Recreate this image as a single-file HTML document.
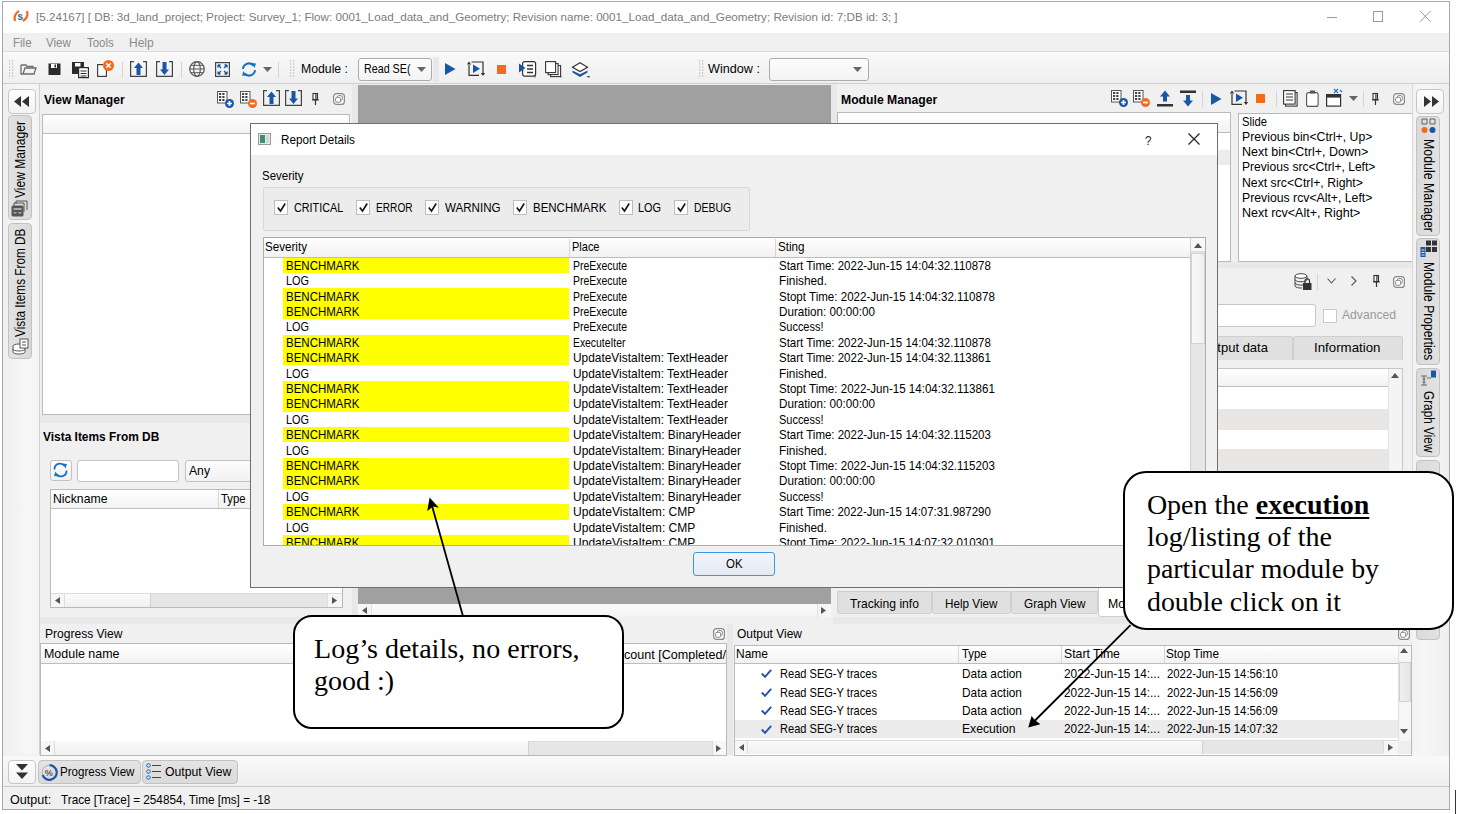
<!DOCTYPE html>
<html><head><meta charset="utf-8">
<style>
*{box-sizing:border-box;margin:0;padding:0}
html,body{width:1457px;height:814px;overflow:hidden;background:#fff}
body{position:relative;font-family:"Liberation Sans",sans-serif;font-size:11.5px;color:#000}
.a{position:absolute}
.t{position:absolute;white-space:nowrap;line-height:1;transform-origin:0 0}
svg{position:absolute;overflow:visible}
</style></head><body>
<div class="a" style="left:0px;top:0px;width:1457px;height:814px;background:#fff"></div>
<div class="a" style="left:2px;top:1px;width:1448px;height:809px;border:1px solid #a8a8a8;background:#f0f0f0"></div>
<div class="a" style="left:3px;top:2px;width:1446px;height:31px;background:#fff"></div>
<svg style="left:12px;top:9px;" width="18" height="14" viewBox="0 0 18 14"><path d="M3 12 Q1 6 7 2" stroke="#f26b1d" stroke-width="2.2" fill="none"/><path d="M15 2 Q17 8 11 12" stroke="#f26b1d" stroke-width="2.2" fill="none"/><text x="5.5" y="11" font-family="Liberation Sans" font-weight="bold" font-size="10" fill="#1f5fa8">s</text></svg>
<div class="t" style="left:36.00px;top:11.48px;font-size:11.6px;color:#7b7b7b;transform:scaleX(1.0036);">[5.24167] [ DB: 3d_land_project; Project: Survey_1; Flow: 0001_Load_data_and_Geometry; Revision name: 0001_Load_data_and_Geometry; Revision id: 7;DB id: 3; ]</div>
<div class="a" style="left:1327px;top:16.5px;width:10px;height:1.2px;background:#999"></div>
<div class="a" style="left:1373px;top:11px;width:10px;height:10.5px;border:1px solid #999"></div>
<svg style="left:1420px;top:11px;" width="11" height="11" viewBox="0 0 11 11"><path d="M0 0 L10.6 10.8 M10.6 0 L0 10.8" stroke="#999" stroke-width="1"/></svg>
<div class="a" style="left:3px;top:33px;width:1446px;height:19px;background:#f0f0f0"></div>
<div class="a" style="left:3px;top:51px;width:1446px;height:1px;background:#dcdcdc"></div>
<div class="t" style="left:13.00px;top:38.13px;font-size:11.9px;color:#8a8a8a;transform:scaleX(0.9700);">File</div>
<div class="t" style="left:46.30px;top:38.13px;font-size:11.9px;color:#8a8a8a;transform:scaleX(0.9774);">View</div>
<div class="t" style="left:86.50px;top:38.13px;font-size:11.9px;color:#8a8a8a;transform:scaleX(0.9611);">Tools</div>
<div class="t" style="left:128.70px;top:38.13px;font-size:11.9px;color:#8a8a8a;transform:scaleX(1.0092);">Help</div>
<div class="a" style="left:3px;top:52px;width:1446px;height:32px;background:linear-gradient(#f9f9f9,#efefef)"></div>
<div class="a" style="left:3px;top:83px;width:1446px;height:1px;background:#cfcfcf"></div>
<svg style="left:9px;top:60px;" width="5" height="17" viewBox="0 0 5 17"><circle cx="0.7" cy="1" r="0.65" fill="#b0b0b0"/><circle cx="0.7" cy="4" r="0.65" fill="#b0b0b0"/><circle cx="0.7" cy="7" r="0.65" fill="#b0b0b0"/><circle cx="0.7" cy="10" r="0.65" fill="#b0b0b0"/><circle cx="0.7" cy="13" r="0.65" fill="#b0b0b0"/><circle cx="0.7" cy="16" r="0.65" fill="#b0b0b0"/><circle cx="3.7" cy="1" r="0.65" fill="#b0b0b0"/><circle cx="3.7" cy="4" r="0.65" fill="#b0b0b0"/><circle cx="3.7" cy="7" r="0.65" fill="#b0b0b0"/><circle cx="3.7" cy="10" r="0.65" fill="#b0b0b0"/><circle cx="3.7" cy="13" r="0.65" fill="#b0b0b0"/><circle cx="3.7" cy="16" r="0.65" fill="#b0b0b0"/></svg>
<svg style="left:290px;top:60px;" width="5" height="17" viewBox="0 0 5 17"><circle cx="0.7" cy="1" r="0.65" fill="#b0b0b0"/><circle cx="0.7" cy="4" r="0.65" fill="#b0b0b0"/><circle cx="0.7" cy="7" r="0.65" fill="#b0b0b0"/><circle cx="0.7" cy="10" r="0.65" fill="#b0b0b0"/><circle cx="0.7" cy="13" r="0.65" fill="#b0b0b0"/><circle cx="0.7" cy="16" r="0.65" fill="#b0b0b0"/><circle cx="3.7" cy="1" r="0.65" fill="#b0b0b0"/><circle cx="3.7" cy="4" r="0.65" fill="#b0b0b0"/><circle cx="3.7" cy="7" r="0.65" fill="#b0b0b0"/><circle cx="3.7" cy="10" r="0.65" fill="#b0b0b0"/><circle cx="3.7" cy="13" r="0.65" fill="#b0b0b0"/><circle cx="3.7" cy="16" r="0.65" fill="#b0b0b0"/></svg>
<svg style="left:699px;top:60px;" width="5" height="17" viewBox="0 0 5 17"><circle cx="0.7" cy="1" r="0.65" fill="#b0b0b0"/><circle cx="0.7" cy="4" r="0.65" fill="#b0b0b0"/><circle cx="0.7" cy="7" r="0.65" fill="#b0b0b0"/><circle cx="0.7" cy="10" r="0.65" fill="#b0b0b0"/><circle cx="0.7" cy="13" r="0.65" fill="#b0b0b0"/><circle cx="0.7" cy="16" r="0.65" fill="#b0b0b0"/><circle cx="3.7" cy="1" r="0.65" fill="#b0b0b0"/><circle cx="3.7" cy="4" r="0.65" fill="#b0b0b0"/><circle cx="3.7" cy="7" r="0.65" fill="#b0b0b0"/><circle cx="3.7" cy="10" r="0.65" fill="#b0b0b0"/><circle cx="3.7" cy="13" r="0.65" fill="#b0b0b0"/><circle cx="3.7" cy="16" r="0.65" fill="#b0b0b0"/></svg>
<div class="a" style="left:122px;top:62px;width:1px;height:16px;background:#d4d4d4"></div>
<div class="a" style="left:181px;top:62px;width:1px;height:16px;background:#d4d4d4"></div>
<div class="a" style="left:278px;top:62px;width:1px;height:16px;background:#d4d4d4"></div>
<svg style="left:20px;top:63px;" width="17" height="12" viewBox="0 0 17 12"><path d="M1 2 V11 H14 L16 5 H5 L3 11" fill="none" stroke="#6d6d6d" stroke-width="1.3"/><path d="M1 2 H6 L7 3.5 H13 V5" fill="none" stroke="#6d6d6d" stroke-width="1.3"/></svg>
<svg style="left:48px;top:63px;" width="13" height="12" viewBox="0 0 13 12"><rect x="0.5" y="0.5" width="12" height="11.5" fill="#2b2b2b"/><rect x="3" y="1" width="6" height="4" fill="#fff"/><rect x="6.5" y="1.5" width="1.5" height="3" fill="#2b2b2b"/></svg>
<svg style="left:72px;top:62px;" width="17" height="16" viewBox="0 0 17 16"><rect x="0" y="0" width="12" height="12" fill="#2b2b2b"/><rect x="3" y="1" width="5.5" height="3.5" fill="#fff"/><rect x="6.6" y="5.6" width="9.8" height="10" fill="#fff" stroke="#2b2b2b" stroke-width="1.2"/><path d="M8.5 9 H14.5 M8.5 11.5 H14.5 M8.5 14 H14.5" stroke="#2b2b2b" stroke-width="1.1"/></svg>
<svg style="left:97px;top:60px;" width="17" height="17" viewBox="0 0 17 17"><path d="M6 4.6 H0.6 V16.4 H9.4 V10" fill="#fff" stroke="#444" stroke-width="1.2"/><circle cx="11.5" cy="5.5" r="5.5" fill="#f26b1d"/><path d="M9.3 3.3 L13.7 7.7 M13.7 3.3 L9.3 7.7" stroke="#fff" stroke-width="1.6"/></svg>
<svg style="left:130px;top:61px;" width="17" height="16" viewBox="0 0 17 16"><path d="M4 0.6 H0.6 V15.4 H16.4 V0.6 H13" fill="none" stroke="#444" stroke-width="1.2"/><path d="M8.5 1.5 L13 7 H10.5 V14 H6.5 V7 H4 Z" fill="#1a56a6"/></svg>
<svg style="left:156px;top:61px;" width="17" height="16" viewBox="0 0 17 16"><path d="M4 0.6 H0.6 V15.4 H16.4 V0.6 H13" fill="none" stroke="#444" stroke-width="1.2"/><path d="M8.5 14 L13 8.5 H10.5 V1 H6.5 V8.5 H4 Z" fill="#1a56a6"/></svg>
<svg style="left:189px;top:61px;" width="16" height="16" viewBox="0 0 16 16"><circle cx="8" cy="8" r="7.3" fill="none" stroke="#555" stroke-width="1.2"/><ellipse cx="8" cy="8" rx="3.3" ry="7.3" fill="none" stroke="#555" stroke-width="1.1"/><path d="M0.7 8 H15.3 M2 4.3 H14 M2 11.7 H14" stroke="#555" stroke-width="1"/></svg>
<svg style="left:215px;top:62px;" width="15" height="15" viewBox="0 0 15 15"><rect x="0.6" y="0.6" width="13.8" height="13.8" fill="none" stroke="#444" stroke-width="1.2"/><path d="M3 3 L6 6 M3 3 H5.5 M3 3 V5.5 M12 3 L9 6 M12 3 H9.5 M12 3 V5.5 M3 12 L6 9 M3 12 H5.5 M3 12 V9.5 M12 12 L9 9 M12 12 H9.5 M12 12 V9.5" stroke="#1a56a6" stroke-width="1.3"/></svg>
<svg style="left:241px;top:62px;" width="16" height="15" viewBox="0 0 16 15"><path d="M2 7 A6 6 0 0 1 12.5 3.5" fill="none" stroke="#1a6fc4" stroke-width="2"/><path d="M14 8 A6 6 0 0 1 3.5 11.5" fill="none" stroke="#1a6fc4" stroke-width="2"/><path d="M10.5 1 L15 1.5 L13.5 6 Z M5.5 14 L1 13.5 L2.5 9 Z" fill="#1a6fc4"/></svg>
<svg style="left:263px;top:67px;" width="9" height="5" viewBox="0 0 9 5"><path d="M0 0 H9 L4.5 5 Z" fill="#666"/></svg>
<div class="t" style="left:301.00px;top:64.43px;font-size:11.9px;color:#000;transform:scaleX(1.0298);">Module :</div>
<div class="a" style="left:358px;top:58px;width:74px;height:23px;background:linear-gradient(#fdfdfd,#f4f4f4);border:1px solid #acacac;border-radius:3px"></div>
<div class="t" style="left:363.50px;top:64.43px;font-size:11.9px;color:#000;transform:scaleX(0.9013);">Read SE(</div>
<svg style="left:417px;top:67px;" width="9" height="5" viewBox="0 0 9 5"><path d="M0 0 H9 L4.5 5 Z" fill="#666"/></svg>
<div class="a" style="left:433px;top:57px;width:6px;height:25px;background:#e8e8e8"></div>
<svg style="left:445px;top:63px;" width="11" height="12" viewBox="0 0 11 12"><path d="M0 0 L10.5 6 L0 12 Z" fill="#1a56a6"/></svg>
<svg style="left:468px;top:61px;" width="17" height="16" viewBox="0 0 17 16"><path d="M1 4 V14.4 H11" fill="none" stroke="#333" stroke-width="1.2"/><path d="M3.5 1 H15 V12" fill="none" stroke="#333" stroke-width="1.2"/><path d="M1 0.5 L-1.2 3.5 H3.2 Z" fill="#333"/><path d="M15 15 L12.8 12 H17.2 Z" fill="#333"/><path d="M5 3.5 L12 7.8 L5 12 Z" fill="#1a56a6"/></svg>
<div class="a" style="left:497px;top:65px;width:9px;height:9px;background:#f26b1d"></div>
<svg style="left:519px;top:61px;" width="18" height="17" viewBox="0 0 18 17"><rect x="3.6" y="0.6" width="13" height="14.5" rx="2" fill="#fff" stroke="#333" stroke-width="1.2"/><path d="M8 4.5 H14 M8 8 H14 M8 11.5 H14" stroke="#333" stroke-width="1.6"/><path d="M0 2.5 L6.5 7 L0 11.5 Z" fill="#1a56a6"/><path d="M15 15.5 L17 15.5 L16 16.8 Z" fill="#333"/></svg>
<svg style="left:545px;top:61px;" width="17" height="17" viewBox="0 0 17 17"><rect x="5.6" y="4.6" width="10" height="11" fill="#fff" stroke="#333" stroke-width="1.1"/><rect x="3.1" y="2.6" width="10" height="11" fill="#fff" stroke="#333" stroke-width="1.1"/><rect x="0.6" y="0.6" width="10" height="11" fill="#fff" stroke="#333" stroke-width="1.1"/><path d="M15 15.5 L17 15.5 L16 16.8 Z" fill="#333"/></svg>
<svg style="left:570.5px;top:61.5px;" width="20" height="17" viewBox="0 0 20 17"><path d="M9 0.8 L16.5 5.2 L9 9.6 L1.5 5.2 Z" fill="#fff" stroke="#333" stroke-width="1.2"/><path d="M1.5 8.6 L9 12.2 L16.5 8.6 L16.5 10.6 L9 15 L1.5 10.6 Z" fill="#1a56a6"/><path d="M15.5 14 H19.5 L17.5 16 Z" fill="#555"/></svg>
<div class="t" style="left:708.00px;top:64.43px;font-size:11.9px;color:#000;transform:scaleX(1.0626);">Window :</div>
<div class="a" style="left:769px;top:58px;width:100px;height:23px;background:linear-gradient(#fdfdfd,#f4f4f4);border:1px solid #acacac;border-radius:3px"></div>
<svg style="left:853px;top:67px;" width="9" height="5" viewBox="0 0 9 5"><path d="M0 0 H9 L4.5 5 Z" fill="#666"/></svg>
<div class="a" style="left:3px;top:84px;width:36px;height:671px;background:linear-gradient(90deg,#efefef,#f7f7f7 70%,#f2f2f2)"></div>
<div class="a" style="left:39px;top:84px;width:1px;height:671px;background:#d0d0d0"></div>
<div class="a" style="left:7.5px;top:89px;width:28px;height:25px;background:linear-gradient(#fdfdfd,#f3f3f3);border:1px solid #c6c6c6;border-radius:4px"></div>
<svg style="left:14px;top:96px;" width="16" height="11" viewBox="0 0 16 11"><path d="M7 0 L0 5.5 L7 11 Z M15 0 L8 5.5 L15 11 Z" fill="#333"/></svg>
<div class="a" style="left:7.5px;top:115px;width:24px;height:105px;background:linear-gradient(90deg,#e2e2e2,#dadada);border:1px solid #c2c2c2;border-radius:4px"></div>
<div class="t" style="left:13.40px;top:198.20px;font-size:14.2px;transform-origin:0 0;transform:rotate(-90deg) scaleX(0.8507)">View Manager</div>
<svg style="left:11px;top:200px;" width="17" height="17" viewBox="0 0 17 17"><path d="M5 4 V1 H16 V10" fill="none" stroke="#555" stroke-width="1"/><path d="M3 6 V3 H13 V12" fill="none" stroke="#555" stroke-width="1"/><rect x="0.5" y="5.5" width="12" height="11" rx="1.5" fill="#555"/><rect x="2.5" y="8" width="8" height="2" fill="#aaa"/><rect x="2.5" y="12" width="3" height="1.5" fill="#aaa"/><rect x="7.5" y="12" width="3" height="1.5" fill="#aaa"/></svg>
<div class="a" style="left:7.5px;top:222.5px;width:24px;height:136px;background:linear-gradient(90deg,#e2e2e2,#dadada);border:1px solid #c2c2c2;border-radius:4px"></div>
<div class="t" style="left:13.40px;top:337.30px;font-size:14.2px;transform-origin:0 0;transform:rotate(-90deg) scaleX(0.8300)">Vista Items From DB</div>
<svg style="left:11px;top:337px;" width="18" height="18" viewBox="0 0 18 18"><ellipse cx="8" cy="9" rx="6" ry="2" fill="#fff" stroke="#555"/><path d="M2 9 V15 A6 2 0 0 0 14 15 V9" fill="#fff" stroke="#555"/><path d="M2 12 A6 2 0 0 0 14 12" fill="none" stroke="#555"/><rect x="9" y="2" width="8" height="9" fill="#fff" stroke="#555"/><path d="M11 5 H15 M11 8 H15" stroke="#555"/></svg>
<div class="t" style="left:43.60px;top:93.54px;font-size:12px;color:#000;font-weight:bold;transform:scaleX(1.0099);">View Manager</div>
<svg style="left:217px;top:91px;" width="17" height="17" viewBox="0 0 17 17"><rect x="0.5" y="0.5" width="9.5" height="11.5" fill="#fff" stroke="#555" stroke-width="1"/><rect x="2" y="2" width="2.2" height="2" fill="#444"/><rect x="2" y="5" width="2.2" height="2" fill="#444"/><rect x="2" y="8" width="2.2" height="2" fill="#444"/><rect x="5.3" y="2" width="2.2" height="2" fill="#444"/><rect x="5.3" y="5" width="2.2" height="2" fill="#444"/><rect x="5.3" y="8" width="2.2" height="2" fill="#444"/><circle cx="12.5" cy="12.5" r="4.5" fill="#1a56a6"/><path d="M10 12.5 H15 M12.5 10 V15" stroke="#fff" stroke-width="1.7"/></svg>
<svg style="left:240px;top:91px;" width="17" height="17" viewBox="0 0 17 17"><rect x="0.5" y="0.5" width="9.5" height="11.5" fill="#fff" stroke="#555" stroke-width="1"/><rect x="2" y="2" width="2.2" height="2" fill="#444"/><rect x="2" y="5" width="2.2" height="2" fill="#444"/><rect x="2" y="8" width="2.2" height="2" fill="#444"/><rect x="5.3" y="2" width="2.2" height="2" fill="#444"/><rect x="5.3" y="5" width="2.2" height="2" fill="#444"/><rect x="5.3" y="8" width="2.2" height="2" fill="#444"/><circle cx="12.5" cy="12.5" r="4.5" fill="#f26b1d"/><path d="M10 12.5 H15" stroke="#fff" stroke-width="1.7"/></svg>
<svg style="left:263px;top:90px;" width="17" height="17" viewBox="0 0 17 17"><path d="M4 0.6 H0.6 V15.4 H16.4 V0.6 H13" fill="none" stroke="#444" stroke-width="1.2"/><path d="M8.5 1.5 L13 7 H10.5 V14 H6.5 V7 H4 Z" fill="#1a56a6"/></svg>
<svg style="left:285px;top:90px;" width="17" height="17" viewBox="0 0 17 17"><path d="M4 0.6 H0.6 V15.4 H16.4 V0.6 H13" fill="none" stroke="#444" stroke-width="1.2"/><path d="M8.5 14 L13 8.5 H10.5 V1 H6.5 V8.5 H4 Z" fill="#1a56a6"/></svg>
<svg style="left:312px;top:93px;" width="7" height="12" viewBox="0 0 7 12"><rect x="1" y="0.5" width="4.5" height="6" fill="#fff" stroke="#333" stroke-width="1.1"/><rect x="3.3" y="1" width="1.2" height="5" fill="#333"/><path d="M0 7 H7 M3.5 7 V12" stroke="#333" stroke-width="1.2"/></svg>
<svg style="left:333px;top:93px;" width="12" height="12" viewBox="0 0 12 12"><rect x="0.6" y="0.6" width="10.8" height="10.8" rx="3" fill="#fafafa" stroke="#8a8a8a" stroke-width="1.2"/><rect x="4.3" y="2.6" width="5" height="5" rx="1.5" fill="#fff" stroke="#8a8a8a" stroke-width="1"/><rect x="2.6" y="4.3" width="5" height="5" rx="1.5" fill="#fff" stroke="#8a8a8a" stroke-width="1"/></svg>
<div class="a" style="left:42px;top:114px;width:308px;height:301px;background:#fff;border:1px solid #b9b9b9"></div>
<div class="a" style="left:43px;top:115px;width:306px;height:19px;background:linear-gradient(#fff,#f2f2f2);border-bottom:1px solid #bdbdbd"></div>
<div class="a" style="left:40px;top:415px;width:318px;height:8px;background:#e8e8e8"></div>
<div class="t" style="left:43.40px;top:431.24px;font-size:12px;color:#000;font-weight:bold;transform:scaleX(0.9928);">Vista Items From DB</div>
<div class="a" style="left:49.5px;top:459.5px;width:22px;height:21.5px;background:linear-gradient(#fdfdfd,#f1f1f1);border:1px solid #c2c2c2;border-radius:3px"></div>
<svg style="left:53px;top:463px;" width="15" height="14" viewBox="0 0 15 14"><path d="M1.5 6.5 A5.5 5.5 0 0 1 11.5 3" fill="none" stroke="#1a6fc4" stroke-width="1.8"/><path d="M13.5 7.5 A5.5 5.5 0 0 1 3.5 11" fill="none" stroke="#1a6fc4" stroke-width="1.8"/><path d="M9.5 0.5 L14 1 L12.5 5.5 Z M5.5 13.5 L1 13 L2.5 8.5 Z" fill="#1a6fc4"/></svg>
<div class="a" style="left:77px;top:459.5px;width:101.5px;height:22.5px;background:#fff;border:1px solid #c2c2c2;border-radius:3px"></div>
<div class="a" style="left:184.5px;top:459.8px;width:100px;height:22.2px;background:linear-gradient(#fdfdfd,#f1f1f1);border:1px solid #c2c2c2;border-radius:3px"></div>
<div class="t" style="left:189.00px;top:466.23px;font-size:11.9px;color:#000;transform:scaleX(1.0241);">Any</div>
<div class="a" style="left:49.5px;top:489px;width:293px;height:119px;background:#fff;border:1px solid #b9b9b9"></div>
<div class="a" style="left:50.5px;top:490px;width:291px;height:19px;background:linear-gradient(#fff,#f2f2f2);border-bottom:1px solid #bdbdbd"></div>
<div class="a" style="left:217.5px;top:490px;width:1px;height:18px;background:#d6d6d6"></div>
<div class="t" style="left:52.50px;top:494.23px;font-size:11.9px;color:#000;transform:scaleX(1.0301);">Nickname</div>
<div class="t" style="left:221.00px;top:494.23px;font-size:11.9px;color:#000;transform:scaleX(0.9496);">Type</div>
<div class="a" style="left:50.5px;top:593px;width:291px;height:14px;background:#e6e6e6;border-top:1px solid #dcdcdc"></div>
<div class="a" style="left:50.5px;top:594px;width:14.5px;height:13px;background:#f6f6f6;border-right:1px solid #dcdcdc"></div>
<div class="a" style="left:65px;top:594px;width:85.5px;height:13px;background:linear-gradient(#fbfbfb,#f0f0f0);border-right:1px solid #d0d0d0"></div>
<div class="a" style="left:327px;top:594px;width:14.5px;height:13px;background:#f6f6f6;border-left:1px solid #dcdcdc"></div>
<svg style="left:55px;top:597px;" width="5" height="7" viewBox="0 0 5 7"><path d="M5 0 V7 L0 3.5 Z" fill="#555"/></svg>
<svg style="left:332px;top:597px;" width="5" height="7" viewBox="0 0 5 7"><path d="M0 0 V7 L5 3.5 Z" fill="#555"/></svg>
<div class="a" style="left:40px;top:617px;width:318px;height:7px;background:#e8e8e8"></div>
<div class="a" style="left:352px;top:84px;width:6px;height:540px;background:#e8e8e8"></div>
<div class="a" style="left:358px;top:85px;width:473px;height:519px;background:#a0a0a0"></div>
<div class="a" style="left:358px;top:604px;width:473px;height:13px;background:linear-gradient(#fbfbfb,#f3f3f3)"></div>
<div class="a" style="left:358px;top:604px;width:14px;height:13px;background:#f6f6f6;border-right:1px solid #e0e0e0"></div>
<svg style="left:362px;top:607px;" width="5" height="7" viewBox="0 0 5 7"><path d="M5 0 V7 L0 3.5 Z" fill="#555"/></svg>
<div class="a" style="left:817px;top:604px;width:14px;height:13px;background:#f6f6f6;border-left:1px solid #e0e0e0"></div>
<svg style="left:821px;top:607px;" width="5" height="7" viewBox="0 0 5 7"><path d="M0 0 V7 L5 3.5 Z" fill="#555"/></svg>
<div class="a" style="left:831px;top:84px;width:6px;height:503px;background:#e8e8e8"></div>
<div class="t" style="left:840.50px;top:93.54px;font-size:12px;color:#000;font-weight:bold;transform:scaleX(1.0161);">Module Manager</div>
<svg style="left:1111px;top:90px;" width="17" height="17" viewBox="0 0 17 17"><rect x="0.5" y="0.5" width="9.5" height="11.5" fill="#fff" stroke="#555" stroke-width="1"/><rect x="2" y="2" width="2.2" height="2" fill="#444"/><rect x="2" y="5" width="2.2" height="2" fill="#444"/><rect x="2" y="8" width="2.2" height="2" fill="#444"/><rect x="5.3" y="2" width="2.2" height="2" fill="#444"/><rect x="5.3" y="5" width="2.2" height="2" fill="#444"/><rect x="5.3" y="8" width="2.2" height="2" fill="#444"/><circle cx="12.5" cy="12.5" r="4.5" fill="#1a56a6"/><path d="M10 12.5 H15 M12.5 10 V15" stroke="#fff" stroke-width="1.7"/></svg>
<svg style="left:1133px;top:90px;" width="17" height="17" viewBox="0 0 17 17"><rect x="0.5" y="0.5" width="9.5" height="11.5" fill="#fff" stroke="#555" stroke-width="1"/><rect x="2" y="2" width="2.2" height="2" fill="#444"/><rect x="2" y="5" width="2.2" height="2" fill="#444"/><rect x="2" y="8" width="2.2" height="2" fill="#444"/><rect x="5.3" y="2" width="2.2" height="2" fill="#444"/><rect x="5.3" y="5" width="2.2" height="2" fill="#444"/><rect x="5.3" y="8" width="2.2" height="2" fill="#444"/><circle cx="12.5" cy="12.5" r="4.5" fill="#f26b1d"/><path d="M10 12.5 H15" stroke="#fff" stroke-width="1.7"/></svg>
<svg style="left:1156px;top:90px;" width="18" height="17" viewBox="0 0 18 17"><path d="M9 0.5 L14 6.5 H11 V11.5 H7 V6.5 H4 Z" fill="#1a56a6"/><rect x="1" y="14" width="16" height="2.5" fill="#333"/></svg>
<svg style="left:1179px;top:90px;" width="18" height="17" viewBox="0 0 18 17"><rect x="1" y="0.5" width="16" height="2.5" fill="#333"/><path d="M9 16.5 L14 10.5 H11 V5 H7 V10.5 H4 Z" fill="#1a56a6"/></svg>
<div class="a" style="left:1202px;top:91px;width:1px;height:16px;background:#d4d4d4"></div>
<svg style="left:1211px;top:93px;" width="11" height="12" viewBox="0 0 11 12"><path d="M0 0 L10.5 6 L0 12 Z" fill="#1a56a6"/></svg>
<svg style="left:1231px;top:90px;" width="17" height="16" viewBox="0 0 17 16"><path d="M1 4 V14.4 H11" fill="none" stroke="#333" stroke-width="1.2"/><path d="M3.5 1 H15 V12" fill="none" stroke="#333" stroke-width="1.2"/><path d="M1 0.5 L-1.2 3.5 H3.2 Z" fill="#333"/><path d="M15 15 L12.8 12 H17.2 Z" fill="#333"/><path d="M5 3.5 L12 7.8 L5 12 Z" fill="#1a56a6"/></svg>
<div class="a" style="left:1256px;top:94px;width:9px;height:9px;background:#f26b1d"></div>
<div class="a" style="left:1276px;top:91px;width:1px;height:16px;background:#d4d4d4"></div>
<svg style="left:1283px;top:90px;" width="15" height="17" viewBox="0 0 15 17"><rect x="2.6" y="2.6" width="11.5" height="13.5" fill="#fff" stroke="#333" stroke-width="1.1"/><rect x="0.6" y="0.6" width="11.5" height="13.5" fill="#fff" stroke="#333" stroke-width="1.1"/><path d="M3 4 H10 M3 7 H10 M3 10 H10" stroke="#333" stroke-width="1.1"/></svg>
<svg style="left:1306px;top:90px;" width="13" height="17" viewBox="0 0 13 17"><rect x="0.6" y="2.6" width="11.5" height="13.8" rx="2" fill="#fff" stroke="#555" stroke-width="1.1"/><rect x="4" y="0.5" width="5" height="3" fill="#555"/></svg>
<svg style="left:1326px;top:88px;" width="17" height="19" viewBox="0 0 17 19"><rect x="0.6" y="6.6" width="14" height="11.5" fill="#fff" stroke="#333" stroke-width="1.2"/><rect x="0.6" y="6.6" width="14" height="3" fill="#333"/><path d="M8 1 L12 5 M12 1 L8 5 M14 2 L16 4" stroke="#1a6fc4" stroke-width="1.1"/></svg>
<svg style="left:1349px;top:96px;" width="9" height="5" viewBox="0 0 9 5"><path d="M0 0 H9 L4.5 5 Z" fill="#666"/></svg>
<div class="a" style="left:1363px;top:91px;width:1px;height:16px;background:#d4d4d4"></div>
<svg style="left:1372px;top:93px;" width="7" height="12" viewBox="0 0 7 12"><rect x="1" y="0.5" width="4.5" height="6" fill="#fff" stroke="#333" stroke-width="1.1"/><rect x="3.3" y="1" width="1.2" height="5" fill="#333"/><path d="M0 7 H7 M3.5 7 V12" stroke="#333" stroke-width="1.2"/></svg>
<svg style="left:1393px;top:93px;" width="12" height="12" viewBox="0 0 12 12"><rect x="0.6" y="0.6" width="10.8" height="10.8" rx="3" fill="#fafafa" stroke="#8a8a8a" stroke-width="1.2"/><rect x="4.3" y="2.6" width="5" height="5" rx="1.5" fill="#fff" stroke="#8a8a8a" stroke-width="1"/><rect x="2.6" y="4.3" width="5" height="5" rx="1.5" fill="#fff" stroke="#8a8a8a" stroke-width="1"/></svg>
<div class="a" style="left:837px;top:112px;width:394px;height:150px;background:#fff;border:1px solid #b9b9b9"></div>
<div class="a" style="left:838px;top:113px;width:392px;height:19.5px;background:linear-gradient(#fff,#f2f2f2);border-bottom:1px solid #bdbdbd"></div>
<div class="a" style="left:838px;top:149.5px;width:392px;height:15.5px;background:#ececec"></div>
<div class="a" style="left:1237.5px;top:112.5px;width:175px;height:149.5px;background:#fff;border:1px solid #b9b9b9"></div>
<div class="t" style="left:1242.00px;top:116.63px;font-size:11.9px;color:#000;transform:scaleX(0.9448);">Slide</div>
<div class="t" style="left:1242.00px;top:131.91px;font-size:11.9px;color:#000;transform:scaleX(1.0303);">Previous bin&lt;Ctrl+, Up&gt;</div>
<div class="t" style="left:1242.00px;top:147.19px;font-size:11.9px;color:#000;transform:scaleX(1.0538);">Next bin&lt;Ctrl+, Down&gt;</div>
<div class="t" style="left:1242.00px;top:162.47px;font-size:11.9px;color:#000;transform:scaleX(1.0169);">Previous src&lt;Ctrl+, Left&gt;</div>
<div class="t" style="left:1242.00px;top:177.75px;font-size:11.9px;color:#000;transform:scaleX(1.0308);">Next src&lt;Ctrl+, Right&gt;</div>
<div class="t" style="left:1242.00px;top:193.03px;font-size:11.9px;color:#000;transform:scaleX(1.0303);">Previous rcv&lt;Alt+, Left&gt;</div>
<div class="t" style="left:1242.00px;top:208.31px;font-size:11.9px;color:#000;transform:scaleX(1.0509);">Next rcv&lt;Alt+, Right&gt;</div>
<div class="a" style="left:833px;top:262px;width:580px;height:6px;background:#e8e8e8"></div>
<svg style="left:1294px;top:273px;" width="18" height="17" viewBox="0 0 18 17"><ellipse cx="7" cy="3" rx="6" ry="2.3" fill="#fff" stroke="#444"/><path d="M1 3 V13 A6 2.3 0 0 0 8 15" fill="none" stroke="#444"/><path d="M13 3 V7" stroke="#444"/><path d="M1 6.5 A6 2.3 0 0 0 13 6.5 M1 10 A6 2.3 0 0 0 9 12" fill="none" stroke="#444"/><rect x="9" y="10" width="8.5" height="7" fill="#333"/><path d="M11 10 V8 A2.2 2.2 0 0 1 15.5 8 V10" fill="none" stroke="#333" stroke-width="1.2"/></svg>
<div class="a" style="left:1317px;top:274px;width:1px;height:16px;background:#d4d4d4"></div>
<svg style="left:1327px;top:278px;" width="9" height="6" viewBox="0 0 9 6"><path d="M0.5 0.5 L4.5 5 L8.5 0.5" fill="none" stroke="#555" stroke-width="1.1"/></svg>
<svg style="left:1351px;top:276px;" width="6" height="10" viewBox="0 0 6 10"><path d="M0.5 0.5 L5 5 L0.5 9.5" fill="none" stroke="#555" stroke-width="1.1"/></svg>
<svg style="left:1373px;top:275px;" width="7" height="12" viewBox="0 0 7 12"><rect x="1" y="0.5" width="4.5" height="6" fill="#fff" stroke="#333" stroke-width="1.1"/><rect x="3.3" y="1" width="1.2" height="5" fill="#333"/><path d="M0 7 H7 M3.5 7 V12" stroke="#333" stroke-width="1.2"/></svg>
<svg style="left:1393px;top:276px;" width="12" height="12" viewBox="0 0 12 12"><rect x="0.6" y="0.6" width="10.8" height="10.8" rx="3" fill="#fafafa" stroke="#8a8a8a" stroke-width="1.2"/><rect x="4.3" y="2.6" width="5" height="5" rx="1.5" fill="#fff" stroke="#8a8a8a" stroke-width="1"/><rect x="2.6" y="4.3" width="5" height="5" rx="1.5" fill="#fff" stroke="#8a8a8a" stroke-width="1"/></svg>
<div class="a" style="left:837px;top:304px;width:479px;height:23px;background:#fff;border:1px solid #c6c6c6;border-radius:3px"></div>
<div class="a" style="left:1323px;top:308.5px;width:14px;height:14px;background:#fff;border:1px solid #c9c9c9"></div>
<div class="t" style="left:1342.00px;top:310.33px;font-size:11.9px;color:#9a9a9a;transform:scaleX(1.0202);">Advanced</div>
<div class="a" style="left:837px;top:336px;width:456px;height:23.5px;background:#e0e0e0;border:1px solid #cfcfcf;border-bottom:none;border-radius:3px 3px 0 0"></div>
<div class="a" style="left:1292.5px;top:336px;width:110px;height:23.5px;background:#e0e0e0;border:1px solid #cfcfcf;border-bottom:none;border-radius:3px 3px 0 0"></div>
<div class="t" style="left:1199.50px;top:342.73px;font-size:11.9px;color:#000;transform:scaleX(1.0934);">Output data</div>
<div class="t" style="left:1314.00px;top:342.73px;font-size:11.9px;color:#000;transform:scaleX(1.1171);">Information</div>
<div class="a" style="left:837px;top:367.5px;width:566px;height:215px;background:#fff;border:1px solid #c6c6c6"></div>
<div class="a" style="left:838px;top:368.5px;width:550px;height:18.5px;background:linear-gradient(#fff,#f2f2f2);border-bottom:1px solid #bdbdbd"></div>
<div class="a" style="left:838px;top:409px;width:550px;height:21px;background:#e8e7e5"></div>
<div class="a" style="left:838px;top:449px;width:550px;height:22px;background:#e8e7e5"></div>
<div class="a" style="left:838px;top:491px;width:550px;height:21px;background:#e8e7e5"></div>
<div class="a" style="left:838px;top:532px;width:550px;height:21px;background:#e8e7e5"></div>
<div class="a" style="left:1388px;top:368.5px;width:14px;height:213px;background:#f4f4f4;border-left:1px solid #e4e4e4"></div>
<svg style="left:1391px;top:373px;" width="8" height="5" viewBox="0 0 8 5"><path d="M0 5 L4 0 L8 5 Z" fill="#555"/></svg>
<div class="a" style="left:833px;top:587px;width:580px;height:1px;background:#c6c6c6"></div>
<div class="a" style="left:837px;top:591px;width:95px;height:23px;background:#e0e0e0;border:1px solid #cfcfcf;border-top:1px solid #cfcfcf;border-radius:0 0 3px 3px"></div>
<div class="t" style="left:850.00px;top:598.53px;font-size:11.9px;color:#000;transform:scaleX(1.0195);">Tracking info</div>
<div class="a" style="left:932px;top:591px;width:79px;height:23px;background:#e0e0e0;border:1px solid #cfcfcf;border-top:1px solid #cfcfcf;border-radius:0 0 3px 3px"></div>
<div class="t" style="left:945.25px;top:598.53px;font-size:11.9px;color:#000;transform:scaleX(0.9839);">Help View</div>
<div class="a" style="left:1011px;top:591px;width:87px;height:23px;background:#e0e0e0;border:1px solid #cfcfcf;border-top:1px solid #cfcfcf;border-radius:0 0 3px 3px"></div>
<div class="t" style="left:1023.75px;top:598.53px;font-size:11.9px;color:#000;transform:scaleX(0.9926);">Graph View</div>
<div class="a" style="left:1098px;top:586px;width:60px;height:31px;background:#fff;border:1px solid #cfcfcf;border-top:none;border-radius:0 0 3px 3px"></div>
<div class="t" style="left:1108.00px;top:598.53px;font-size:11.9px;color:#000;transform:scaleX(1.0355);">Module Properties</div>
<div class="a" style="left:833px;top:617px;width:580px;height:7px;background:#e8e8e8"></div>
<div class="a" style="left:1412px;top:84px;width:37px;height:702px;background:linear-gradient(90deg,#f2f2f2,#f7f7f7 30%,#efefef)"></div>
<div class="a" style="left:1412px;top:84px;width:1px;height:540px;background:#d8d8d8"></div>
<div class="a" style="left:1416px;top:89px;width:28px;height:25px;background:linear-gradient(#fdfdfd,#f3f3f3);border:1px solid #c6c6c6;border-radius:4px"></div>
<svg style="left:1423px;top:96px;" width="16" height="11" viewBox="0 0 16 11"><path d="M1 0 L8 5.5 L1 11 Z M9 0 L16 5.5 L9 11 Z" fill="#333"/></svg>
<div class="a" style="left:1416px;top:116px;width:24px;height:120px;background:linear-gradient(90deg,#dadada,#e2e2e2);border:1px solid #c2c2c2;border-radius:4px"></div>
<div class="t" style="left:1435.50px;top:139.00px;font-size:14.2px;transform-origin:0 0;transform:rotate(90deg) scaleX(0.8727)">Module Manager</div>
<svg style="left:1420px;top:118px;" width="17" height="17" viewBox="0 0 17 17"><path d="M2 1 H7 V6 H2 Z M10 1 H15 V6 H10 Z" fill="none" stroke="#555" stroke-width="0.9"/><circle cx="4.5" cy="12" r="3" fill="#f26b1d"/><circle cx="12.5" cy="12" r="3" fill="#1a56a6"/></svg>
<div class="a" style="left:1416px;top:238px;width:24px;height:127px;background:linear-gradient(90deg,#dadada,#e2e2e2);border:1px solid #c2c2c2;border-radius:4px"></div>
<div class="t" style="left:1435.50px;top:262.20px;font-size:14.2px;transform-origin:0 0;transform:rotate(90deg) scaleX(0.8548)">Module Properties</div>
<svg style="left:1420px;top:240px;" width="17" height="17" viewBox="0 0 17 17"><rect x="6" y="0.5" width="5" height="5" fill="#333"/><rect x="12" y="0.5" width="5" height="5" fill="#333"/><rect x="6" y="7" width="5" height="5" fill="#333"/><rect x="12" y="7" width="5" height="5" fill="#333"/><rect x="0.5" y="7" width="5" height="10" fill="#1a56a6"/><path d="M1.5 10 H4.5 M1.5 12.5 H4.5 M1.5 15 H4.5" stroke="#fff" stroke-width="0.9"/></svg>
<div class="a" style="left:1416px;top:368px;width:24px;height:88.5px;background:linear-gradient(90deg,#dadada,#e2e2e2);border:1px solid #c2c2c2;border-radius:4px"></div>
<div class="t" style="left:1435.50px;top:391.00px;font-size:14.2px;transform-origin:0 0;transform:rotate(90deg) scaleX(0.8318)">Graph View</div>
<svg style="left:1420px;top:370px;" width="17" height="17" viewBox="0 0 17 17"><rect x="11" y="0.5" width="5" height="7" fill="#1a56a6"/><path d="M1 6 H7 M1 15 H7 M4 6 V15 M2.5 9 H5.5 M2.5 12 H5.5 M7 8 H11" fill="none" stroke="#666" stroke-width="1"/></svg>
<div class="a" style="left:1416px;top:459.5px;width:24px;height:180px;background:linear-gradient(90deg,#dadada,#e2e2e2);border:1px solid #c2c2c2;border-radius:4px"></div>
<div class="t" style="left:1435.50px;top:482.00px;font-size:14.2px;transform-origin:0 0;transform:rotate(90deg) scaleX(0.9080)">Output View</div>
<div class="t" style="left:44.50px;top:628.73px;font-size:11.9px;color:#000;transform:scaleX(1.0130);">Progress View</div>
<svg style="left:713px;top:628px;" width="12" height="12" viewBox="0 0 12 12"><rect x="0.6" y="0.6" width="10.8" height="10.8" rx="3" fill="#fafafa" stroke="#8a8a8a" stroke-width="1.2"/><rect x="4.3" y="2.6" width="5" height="5" rx="1.5" fill="#fff" stroke="#8a8a8a" stroke-width="1"/><rect x="2.6" y="4.3" width="5" height="5" rx="1.5" fill="#fff" stroke="#8a8a8a" stroke-width="1"/></svg>
<div class="a" style="left:40px;top:643px;width:687px;height:112.5px;background:#fff;border:1px solid #b9b9b9"></div>
<div class="a" style="left:41px;top:644px;width:685px;height:19.5px;background:linear-gradient(#fff,#f2f2f2);border-bottom:1px solid #bdbdbd"></div>
<div class="t" style="left:43.50px;top:649.23px;font-size:11.9px;color:#000;transform:scaleX(1.0471);">Module name</div>
<div class="t" style="left:624.00px;top:649.73px;font-size:11.9px;color:#000;transform:scaleX(1.0561);">count [Completed/</div>
<div class="a" style="left:41px;top:740.5px;width:685px;height:14.5px;background:#e6e6e6;border-top:1px solid #dcdcdc"></div>
<div class="a" style="left:41px;top:741px;width:14px;height:14px;background:#f6f6f6;border-right:1px solid #dcdcdc"></div>
<div class="a" style="left:55px;top:741px;width:474px;height:14px;background:linear-gradient(#fbfbfb,#f0f0f0);border-right:1px solid #d0d0d0"></div>
<div class="a" style="left:712px;top:741px;width:14px;height:14px;background:#f6f6f6;border-left:1px solid #dcdcdc"></div>
<svg style="left:45px;top:744.5px;" width="5" height="7" viewBox="0 0 5 7"><path d="M5 0 V7 L0 3.5 Z" fill="#555"/></svg>
<svg style="left:716px;top:744.5px;" width="5" height="7" viewBox="0 0 5 7"><path d="M0 0 V7 L5 3.5 Z" fill="#555"/></svg>
<div class="a" style="left:727px;top:624px;width:6px;height:131px;background:#e8e8e8"></div>
<div class="t" style="left:737.00px;top:628.93px;font-size:11.9px;color:#000;transform:scaleX(1.0061);">Output View</div>
<svg style="left:1398px;top:628px;" width="12" height="12" viewBox="0 0 12 12"><rect x="0.6" y="0.6" width="10.8" height="10.8" rx="3" fill="#fafafa" stroke="#8a8a8a" stroke-width="1.2"/><rect x="4.3" y="2.6" width="5" height="5" rx="1.5" fill="#fff" stroke="#8a8a8a" stroke-width="1"/><rect x="2.6" y="4.3" width="5" height="5" rx="1.5" fill="#fff" stroke="#8a8a8a" stroke-width="1"/></svg>
<div class="a" style="left:733.5px;top:644.5px;width:678px;height:111px;background:#fff;border:1px solid #b9b9b9"></div>
<div class="a" style="left:734.5px;top:645.5px;width:663px;height:18px;background:linear-gradient(#fff,#f2f2f2);border-bottom:1px solid #bdbdbd"></div>
<div class="a" style="left:957.5px;top:646px;width:1px;height:17px;background:#d6d6d6"></div>
<div class="a" style="left:1060.5px;top:646px;width:1px;height:17px;background:#d6d6d6"></div>
<div class="a" style="left:1163.5px;top:646px;width:1px;height:17px;background:#d6d6d6"></div>
<div class="t" style="left:735.50px;top:649.13px;font-size:11.9px;color:#000;transform:scaleX(1.0081);">Name</div>
<div class="t" style="left:961.50px;top:649.13px;font-size:11.9px;color:#000;transform:scaleX(0.9496);">Type</div>
<div class="t" style="left:1063.50px;top:649.13px;font-size:11.9px;color:#000;transform:scaleX(1.0327);">Start Time</div>
<div class="t" style="left:1166.00px;top:649.13px;font-size:11.9px;color:#000;transform:scaleX(0.9893);">Stop Time</div>
<div class="a" style="left:734.5px;top:719.5px;width:663px;height:18.5px;background:#ececec"></div>
<svg style="left:761px;top:669.3px;" width="11" height="9" viewBox="0 0 11 9"><path d="M0.8 4.5 L4 7.8 L10.2 0.8" fill="none" stroke="#1a56a6" stroke-width="1.9"/></svg>
<div class="t" style="left:780.30px;top:669.03px;font-size:11.9px;color:#000;transform:scaleX(0.9302);">Read SEG-Y traces</div>
<div class="t" style="left:962.00px;top:669.03px;font-size:11.9px;color:#000;transform:scaleX(0.9967);">Data action</div>
<div class="t" style="left:1064.00px;top:669.03px;font-size:11.9px;color:#000;transform:scaleX(0.9939);">2022-Jun-15 14:...</div>
<div class="t" style="left:1167.00px;top:669.03px;font-size:11.9px;color:#000;transform:scaleX(0.9532);">2022-Jun-15 14:56:10</div>
<svg style="left:761px;top:687.77px;" width="11" height="9" viewBox="0 0 11 9"><path d="M0.8 4.5 L4 7.8 L10.2 0.8" fill="none" stroke="#1a56a6" stroke-width="1.9"/></svg>
<div class="t" style="left:780.30px;top:687.50px;font-size:11.9px;color:#000;transform:scaleX(0.9302);">Read SEG-Y traces</div>
<div class="t" style="left:962.00px;top:687.50px;font-size:11.9px;color:#000;transform:scaleX(0.9967);">Data action</div>
<div class="t" style="left:1064.00px;top:687.50px;font-size:11.9px;color:#000;transform:scaleX(0.9939);">2022-Jun-15 14:...</div>
<div class="t" style="left:1167.00px;top:687.50px;font-size:11.9px;color:#000;transform:scaleX(0.9532);">2022-Jun-15 14:56:09</div>
<svg style="left:761px;top:706.24px;" width="11" height="9" viewBox="0 0 11 9"><path d="M0.8 4.5 L4 7.8 L10.2 0.8" fill="none" stroke="#1a56a6" stroke-width="1.9"/></svg>
<div class="t" style="left:780.30px;top:705.97px;font-size:11.9px;color:#000;transform:scaleX(0.9302);">Read SEG-Y traces</div>
<div class="t" style="left:962.00px;top:705.97px;font-size:11.9px;color:#000;transform:scaleX(0.9967);">Data action</div>
<div class="t" style="left:1064.00px;top:705.97px;font-size:11.9px;color:#000;transform:scaleX(0.9939);">2022-Jun-15 14:...</div>
<div class="t" style="left:1167.00px;top:705.97px;font-size:11.9px;color:#000;transform:scaleX(0.9532);">2022-Jun-15 14:56:09</div>
<svg style="left:761px;top:724.7099999999999px;" width="11" height="9" viewBox="0 0 11 9"><path d="M0.8 4.5 L4 7.8 L10.2 0.8" fill="none" stroke="#1a56a6" stroke-width="1.9"/></svg>
<div class="t" style="left:780.30px;top:724.44px;font-size:11.9px;color:#000;transform:scaleX(0.9302);">Read SEG-Y traces</div>
<div class="t" style="left:962.00px;top:724.44px;font-size:11.9px;color:#000;transform:scaleX(1.0237);">Execution</div>
<div class="t" style="left:1064.00px;top:724.44px;font-size:11.9px;color:#000;transform:scaleX(0.9939);">2022-Jun-15 14:...</div>
<div class="t" style="left:1167.00px;top:724.44px;font-size:11.9px;color:#000;transform:scaleX(0.9532);">2022-Jun-15 14:07:32</div>
<div class="a" style="left:1397.5px;top:645.5px;width:13px;height:95px;background:#f6f6f6;border-left:1px solid #e0e0e0"></div>
<div class="a" style="left:1398.5px;top:662px;width:12px;height:40px;background:linear-gradient(90deg,#f0f0f0,#e6e6e6);border:1px solid #d0d0d0"></div>
<svg style="left:1400px;top:648px;" width="8" height="5" viewBox="0 0 8 5"><path d="M0 5 L4 0 L8 5 Z" fill="#555"/></svg>
<svg style="left:1400px;top:729px;" width="8" height="5" viewBox="0 0 8 5"><path d="M0 0 L4 5 L8 0 Z" fill="#555"/></svg>
<div class="a" style="left:734.5px;top:740px;width:663px;height:14px;background:#e6e6e6;border-top:1px solid #dcdcdc"></div>
<div class="a" style="left:734.5px;top:740.5px;width:13px;height:13.5px;background:#f6f6f6;border-right:1px solid #dcdcdc"></div>
<div class="a" style="left:747.5px;top:740.5px;width:455.5px;height:13.5px;background:linear-gradient(#fbfbfb,#f0f0f0);border-right:1px solid #d0d0d0"></div>
<div class="a" style="left:1383px;top:740.5px;width:14.5px;height:13.5px;background:#f6f6f6;border-left:1px solid #dcdcdc"></div>
<svg style="left:738.5px;top:744px;" width="5" height="7" viewBox="0 0 5 7"><path d="M5 0 V7 L0 3.5 Z" fill="#555"/></svg>
<svg style="left:1387.5px;top:744px;" width="5" height="7" viewBox="0 0 5 7"><path d="M0 0 V7 L5 3.5 Z" fill="#555"/></svg>
<div class="a" style="left:1397.5px;top:740.5px;width:13px;height:13.5px;background:#eeeeee"></div>
<div class="a" style="left:3px;top:755.5px;width:1446px;height:30px;background:linear-gradient(#f9f9f9,#efefef)"></div>
<div class="a" style="left:7.5px;top:760px;width:28px;height:24px;background:linear-gradient(#fdfdfd,#f3f3f3);border:1px solid #c6c6c6;border-radius:4px"></div>
<svg style="left:15.5px;top:764px;" width="12" height="16" viewBox="0 0 12 16"><path d="M0 0 H12 L6 6.5 Z M0 8.5 H12 L6 15 Z" fill="#333"/></svg>
<div class="a" style="left:37.5px;top:760px;width:103px;height:24px;background:linear-gradient(#e4e4e4,#dadada);border:1px solid #c2c2c2;border-radius:4px"></div>
<svg style="left:41px;top:764px;" width="17" height="17" viewBox="0 0 17 17"><path d="M8.5 1.2 A7.3 7.3 0 1 1 1.6 11" fill="none" stroke="#1a56a6" stroke-width="2.2"/><path d="M1.6 11 A7.3 7.3 0 0 1 8.5 1.2" fill="none" stroke="#9a9a9a" stroke-width="0.7"/><text x="3.8" y="12" font-family="Liberation Sans" font-size="9" fill="#222">%</text></svg>
<div class="t" style="left:60.00px;top:767.23px;font-size:11.9px;color:#000;transform:scaleX(0.9738);">Progress View</div>
<div class="a" style="left:142px;top:760px;width:95.5px;height:24px;background:linear-gradient(#e4e4e4,#dadada);border:1px solid #c2c2c2;border-radius:4px"></div>
<svg style="left:146px;top:763px;" width="16" height="17" viewBox="0 0 16 17"><circle cx="2.5" cy="2.5" r="1.8" fill="none" stroke="#1a6fc4" stroke-width="1"/><circle cx="2.5" cy="8.5" r="1.8" fill="none" stroke="#1a6fc4" stroke-width="1"/><circle cx="2.5" cy="14.5" r="1.8" fill="none" stroke="#1a6fc4" stroke-width="1"/><path d="M6 2.5 H15 M6 8.5 H15 M6 14.5 H15" stroke="#444" stroke-width="1.2"/></svg>
<div class="t" style="left:164.50px;top:767.23px;font-size:11.9px;color:#000;transform:scaleX(1.0293);">Output View</div>
<div class="a" style="left:3px;top:785.5px;width:1446px;height:1px;background:#cacaca"></div>
<div class="a" style="left:3px;top:786.5px;width:1446px;height:22px;background:#f0f0f0"></div>
<div class="t" style="left:9.60px;top:794.93px;font-size:11.9px;color:#000;transform:scaleX(1.0556);">Output:</div>
<div class="t" style="left:61.00px;top:794.93px;font-size:11.9px;color:#000;transform:scaleX(0.9873);">Trace [Trace] = 254854, Time [ms] = -18</div>
<div class="a" style="left:1454.5px;top:790px;width:1.5px;height:24px;background:#333"></div>
<div class="a" style="left:249.5px;top:123px;width:968px;height:465px;background:#f0f0f0;border:1px solid #6f6f6f"></div>
<div class="a" style="left:250.5px;top:124px;width:966px;height:31px;background:#fff"></div>
<svg style="left:258px;top:133px;" width="13" height="12" viewBox="0 0 13 12"><rect x="0.5" y="0.5" width="12" height="11" fill="#e8e8e8" stroke="#9a9a9a"/><rect x="2" y="2" width="5" height="8" fill="#3f8f6e"/><rect x="8" y="2" width="3" height="8" fill="#cfd8e0"/></svg>
<div class="t" style="left:281.00px;top:134.53px;font-size:11.9px;color:#000;transform:scaleX(0.9815);">Report Details</div>
<div class="t" style="left:1144.50px;top:133.50px;font-size:13px;color:#222;transform:scaleX(0.8990);">?</div>
<svg style="left:1187.5px;top:133px;" width="12" height="12" viewBox="0 0 12 12"><path d="M0.5 0.5 L11.5 11.5 M11.5 0.5 L0.5 11.5" stroke="#222" stroke-width="1.2"/></svg>
<div class="t" style="left:262.00px;top:170.63px;font-size:11.9px;color:#000;transform:scaleX(0.9654);">Severity</div>
<div class="a" style="left:263px;top:186.5px;width:487px;height:44px;border:1px solid #d8d8d8;border-radius:2px;background:#ececec"></div>
<div class="a" style="left:274.1px;top:200px;width:14px;height:14.5px;background:#fff;border:1px solid #bdbdbd"></div>
<svg style="left:276.6px;top:203px;" width="9" height="9" viewBox="0 0 9 9"><path d="M0.8 4.5 L3.5 8 L8.2 0.5" fill="none" stroke="#111" stroke-width="1.6"/></svg>
<div class="t" style="left:293.70px;top:203.33px;font-size:11.9px;color:#000;transform:scaleX(0.9093);">CRITICAL</div>
<div class="a" style="left:356px;top:200px;width:14px;height:14.5px;background:#fff;border:1px solid #bdbdbd"></div>
<svg style="left:358.5px;top:203px;" width="9" height="9" viewBox="0 0 9 9"><path d="M0.8 4.5 L3.5 8 L8.2 0.5" fill="none" stroke="#111" stroke-width="1.6"/></svg>
<div class="t" style="left:375.70px;top:203.33px;font-size:11.9px;color:#000;transform:scaleX(0.8517);">ERROR</div>
<div class="a" style="left:425.3px;top:200px;width:14px;height:14.5px;background:#fff;border:1px solid #bdbdbd"></div>
<svg style="left:427.8px;top:203px;" width="9" height="9" viewBox="0 0 9 9"><path d="M0.8 4.5 L3.5 8 L8.2 0.5" fill="none" stroke="#111" stroke-width="1.6"/></svg>
<div class="t" style="left:444.60px;top:203.33px;font-size:11.9px;color:#000;transform:scaleX(0.9742);">WARNING</div>
<div class="a" style="left:513.2px;top:200px;width:14px;height:14.5px;background:#fff;border:1px solid #bdbdbd"></div>
<svg style="left:515.7px;top:203px;" width="9" height="9" viewBox="0 0 9 9"><path d="M0.8 4.5 L3.5 8 L8.2 0.5" fill="none" stroke="#111" stroke-width="1.6"/></svg>
<div class="t" style="left:532.80px;top:203.33px;font-size:11.9px;color:#000;transform:scaleX(0.9653);">BENCHMARK</div>
<div class="a" style="left:618.8px;top:200px;width:14px;height:14.5px;background:#fff;border:1px solid #bdbdbd"></div>
<svg style="left:621.3px;top:203px;" width="9" height="9" viewBox="0 0 9 9"><path d="M0.8 4.5 L3.5 8 L8.2 0.5" fill="none" stroke="#111" stroke-width="1.6"/></svg>
<div class="t" style="left:638.40px;top:203.33px;font-size:11.9px;color:#000;transform:scaleX(0.9152);">LOG</div>
<div class="a" style="left:674.4px;top:200px;width:14px;height:14.5px;background:#fff;border:1px solid #bdbdbd"></div>
<svg style="left:676.9px;top:203px;" width="9" height="9" viewBox="0 0 9 9"><path d="M0.8 4.5 L3.5 8 L8.2 0.5" fill="none" stroke="#111" stroke-width="1.6"/></svg>
<div class="t" style="left:694.00px;top:203.33px;font-size:11.9px;color:#000;transform:scaleX(0.8767);">DEBUG</div>
<div class="a" style="left:262.5px;top:237px;width:943px;height:308.5px;background:#fff;border:1px solid #adadad"></div>
<div class="a" style="left:263.5px;top:238px;width:927px;height:19.5px;background:linear-gradient(#fff,#f1f1f1);border-bottom:1px solid #bdbdbd"></div>
<div class="a" style="left:569px;top:239px;width:1px;height:18px;background:#d6d6d6"></div>
<div class="a" style="left:774.5px;top:239px;width:1px;height:18px;background:#d6d6d6"></div>
<div class="t" style="left:264.90px;top:242.43px;font-size:11.9px;color:#000;transform:scaleX(0.9770);">Severity</div>
<div class="t" style="left:571.70px;top:242.43px;font-size:11.9px;color:#000;transform:scaleX(0.9238);">Place</div>
<div class="t" style="left:778.10px;top:242.43px;font-size:11.9px;color:#000;transform:scaleX(0.9770);">Sting</div>
<div class="a" style="left:263.5px;top:257.5px;width:927px;height:287.5px;overflow:hidden">
<div class="a" style="left:19.5px;top:0.00px;width:286px;height:15.46px;background:#ffff00"></div>
<div class="t" style="left:22.50px;top:3.23px;font-size:11.9px;color:#000;transform:scaleX(0.9679);">BENCHMARK</div>
<div class="t" style="left:309.50px;top:3.23px;font-size:11.9px;color:#000;transform:scaleX(0.8778);">PreExecute</div>
<div class="t" style="left:515.50px;top:3.23px;font-size:11.9px;color:#000;transform:scaleX(0.9662);">Start Time: 2022-Jun-15 14:04:32.110878</div>
<div class="t" style="left:22.50px;top:18.64px;font-size:11.9px;color:#000;transform:scaleX(0.9152);">LOG</div>
<div class="t" style="left:309.50px;top:18.64px;font-size:11.9px;color:#000;transform:scaleX(0.8778);">PreExecute</div>
<div class="t" style="left:515.50px;top:18.64px;font-size:11.9px;color:#000;transform:scaleX(0.9941);">Finished.</div>
<div class="a" style="left:19.5px;top:30.82px;width:286px;height:15.46px;background:#ffff00"></div>
<div class="t" style="left:22.50px;top:34.05px;font-size:11.9px;color:#000;transform:scaleX(0.9679);">BENCHMARK</div>
<div class="t" style="left:309.50px;top:34.05px;font-size:11.9px;color:#000;transform:scaleX(0.8778);">PreExecute</div>
<div class="t" style="left:515.50px;top:34.05px;font-size:11.9px;color:#000;transform:scaleX(0.9726);">Stopt Time: 2022-Jun-15 14:04:32.110878</div>
<div class="a" style="left:19.5px;top:46.23px;width:286px;height:15.46px;background:#ffff00"></div>
<div class="t" style="left:22.50px;top:49.46px;font-size:11.9px;color:#000;transform:scaleX(0.9679);">BENCHMARK</div>
<div class="t" style="left:309.50px;top:49.46px;font-size:11.9px;color:#000;transform:scaleX(0.8778);">PreExecute</div>
<div class="t" style="left:515.50px;top:49.46px;font-size:11.9px;color:#000;transform:scaleX(0.9805);">Duration: 00:00:00</div>
<div class="t" style="left:22.50px;top:64.87px;font-size:11.9px;color:#000;transform:scaleX(0.9152);">LOG</div>
<div class="t" style="left:309.50px;top:64.87px;font-size:11.9px;color:#000;transform:scaleX(0.8778);">PreExecute</div>
<div class="t" style="left:515.50px;top:64.87px;font-size:11.9px;color:#000;transform:scaleX(0.9217);">Success!</div>
<div class="a" style="left:19.5px;top:77.05px;width:286px;height:15.46px;background:#ffff00"></div>
<div class="t" style="left:22.50px;top:80.28px;font-size:11.9px;color:#000;transform:scaleX(0.9679);">BENCHMARK</div>
<div class="t" style="left:309.50px;top:80.28px;font-size:11.9px;color:#000;transform:scaleX(0.8722);">ExecuteIter</div>
<div class="t" style="left:515.50px;top:80.28px;font-size:11.9px;color:#000;transform:scaleX(0.9662);">Start Time: 2022-Jun-15 14:04:32.110878</div>
<div class="a" style="left:19.5px;top:92.46px;width:286px;height:15.46px;background:#ffff00"></div>
<div class="t" style="left:22.50px;top:95.69px;font-size:11.9px;color:#000;transform:scaleX(0.9679);">BENCHMARK</div>
<div class="t" style="left:309.50px;top:95.69px;font-size:11.9px;color:#000;transform:scaleX(0.9999);">UpdateVistaItem: TextHeader</div>
<div class="t" style="left:515.50px;top:95.69px;font-size:11.9px;color:#000;transform:scaleX(0.9662);">Start Time: 2022-Jun-15 14:04:32.113861</div>
<div class="t" style="left:22.50px;top:111.10px;font-size:11.9px;color:#000;transform:scaleX(0.9152);">LOG</div>
<div class="t" style="left:309.50px;top:111.10px;font-size:11.9px;color:#000;transform:scaleX(0.9999);">UpdateVistaItem: TextHeader</div>
<div class="t" style="left:515.50px;top:111.10px;font-size:11.9px;color:#000;transform:scaleX(0.9941);">Finished.</div>
<div class="a" style="left:19.5px;top:123.28px;width:286px;height:15.46px;background:#ffff00"></div>
<div class="t" style="left:22.50px;top:126.51px;font-size:11.9px;color:#000;transform:scaleX(0.9679);">BENCHMARK</div>
<div class="t" style="left:309.50px;top:126.51px;font-size:11.9px;color:#000;transform:scaleX(0.9999);">UpdateVistaItem: TextHeader</div>
<div class="t" style="left:515.50px;top:126.51px;font-size:11.9px;color:#000;transform:scaleX(0.9726);">Stopt Time: 2022-Jun-15 14:04:32.113861</div>
<div class="a" style="left:19.5px;top:138.69px;width:286px;height:15.46px;background:#ffff00"></div>
<div class="t" style="left:22.50px;top:141.92px;font-size:11.9px;color:#000;transform:scaleX(0.9679);">BENCHMARK</div>
<div class="t" style="left:309.50px;top:141.92px;font-size:11.9px;color:#000;transform:scaleX(0.9999);">UpdateVistaItem: TextHeader</div>
<div class="t" style="left:515.50px;top:141.92px;font-size:11.9px;color:#000;transform:scaleX(0.9805);">Duration: 00:00:00</div>
<div class="t" style="left:22.50px;top:157.33px;font-size:11.9px;color:#000;transform:scaleX(0.9152);">LOG</div>
<div class="t" style="left:309.50px;top:157.33px;font-size:11.9px;color:#000;transform:scaleX(0.9999);">UpdateVistaItem: TextHeader</div>
<div class="t" style="left:515.50px;top:157.33px;font-size:11.9px;color:#000;transform:scaleX(0.9217);">Success!</div>
<div class="a" style="left:19.5px;top:169.51px;width:286px;height:15.46px;background:#ffff00"></div>
<div class="t" style="left:22.50px;top:172.74px;font-size:11.9px;color:#000;transform:scaleX(0.9679);">BENCHMARK</div>
<div class="t" style="left:309.50px;top:172.74px;font-size:11.9px;color:#000;transform:scaleX(1.0052);">UpdateVistaItem: BinaryHeader</div>
<div class="t" style="left:515.50px;top:172.74px;font-size:11.9px;color:#000;transform:scaleX(0.9662);">Start Time: 2022-Jun-15 14:04:32.115203</div>
<div class="t" style="left:22.50px;top:188.15px;font-size:11.9px;color:#000;transform:scaleX(0.9152);">LOG</div>
<div class="t" style="left:309.50px;top:188.15px;font-size:11.9px;color:#000;transform:scaleX(1.0052);">UpdateVistaItem: BinaryHeader</div>
<div class="t" style="left:515.50px;top:188.15px;font-size:11.9px;color:#000;transform:scaleX(0.9941);">Finished.</div>
<div class="a" style="left:19.5px;top:200.33px;width:286px;height:15.46px;background:#ffff00"></div>
<div class="t" style="left:22.50px;top:203.56px;font-size:11.9px;color:#000;transform:scaleX(0.9679);">BENCHMARK</div>
<div class="t" style="left:309.50px;top:203.56px;font-size:11.9px;color:#000;transform:scaleX(1.0052);">UpdateVistaItem: BinaryHeader</div>
<div class="t" style="left:515.50px;top:203.56px;font-size:11.9px;color:#000;transform:scaleX(0.9726);">Stopt Time: 2022-Jun-15 14:04:32.115203</div>
<div class="a" style="left:19.5px;top:215.74px;width:286px;height:15.46px;background:#ffff00"></div>
<div class="t" style="left:22.50px;top:218.97px;font-size:11.9px;color:#000;transform:scaleX(0.9679);">BENCHMARK</div>
<div class="t" style="left:309.50px;top:218.97px;font-size:11.9px;color:#000;transform:scaleX(1.0052);">UpdateVistaItem: BinaryHeader</div>
<div class="t" style="left:515.50px;top:218.97px;font-size:11.9px;color:#000;transform:scaleX(0.9805);">Duration: 00:00:00</div>
<div class="t" style="left:22.50px;top:234.38px;font-size:11.9px;color:#000;transform:scaleX(0.9152);">LOG</div>
<div class="t" style="left:309.50px;top:234.38px;font-size:11.9px;color:#000;transform:scaleX(1.0052);">UpdateVistaItem: BinaryHeader</div>
<div class="t" style="left:515.50px;top:234.38px;font-size:11.9px;color:#000;transform:scaleX(0.9217);">Success!</div>
<div class="a" style="left:19.5px;top:246.56px;width:286px;height:15.46px;background:#ffff00"></div>
<div class="t" style="left:22.50px;top:249.79px;font-size:11.9px;color:#000;transform:scaleX(0.9679);">BENCHMARK</div>
<div class="t" style="left:309.50px;top:249.79px;font-size:11.9px;color:#000;transform:scaleX(1.0140);">UpdateVistaItem: CMP</div>
<div class="t" style="left:515.50px;top:249.79px;font-size:11.9px;color:#000;transform:scaleX(0.9623);">Start Time: 2022-Jun-15 14:07:31.987290</div>
<div class="t" style="left:22.50px;top:265.20px;font-size:11.9px;color:#000;transform:scaleX(0.9152);">LOG</div>
<div class="t" style="left:309.50px;top:265.20px;font-size:11.9px;color:#000;transform:scaleX(1.0140);">UpdateVistaItem: CMP</div>
<div class="t" style="left:515.50px;top:265.20px;font-size:11.9px;color:#000;transform:scaleX(0.9941);">Finished.</div>
<div class="a" style="left:19.5px;top:277.38px;width:286px;height:15.46px;background:#ffff00"></div>
<div class="t" style="left:22.50px;top:280.61px;font-size:11.9px;color:#000;transform:scaleX(0.9679);">BENCHMARK</div>
<div class="t" style="left:309.50px;top:280.61px;font-size:11.9px;color:#000;transform:scaleX(1.0140);">UpdateVistaItem: CMP</div>
<div class="t" style="left:515.50px;top:280.61px;font-size:11.9px;color:#000;transform:scaleX(0.9688);">Stopt Time: 2022-Jun-15 14:07:32.010301</div>
</div>
<div class="a" style="left:1190px;top:238px;width:15px;height:307px;background:#e6e6e6;border-left:1px solid #cfcfcf"></div>
<div class="a" style="left:1191px;top:238px;width:14px;height:14px;background:#f8f8f8;border-bottom:1px solid #d8d8d8"></div>
<svg style="left:1194px;top:243px;" width="8" height="5" viewBox="0 0 8 5"><path d="M0 5 L4 0 L8 5 Z" fill="#555"/></svg>
<div class="a" style="left:1191px;top:252.5px;width:14px;height:91px;background:linear-gradient(90deg,#f8f8f8,#f0f0f0);border:1px solid #d2d2d2"></div>
<div class="a" style="left:693px;top:552.3px;width:81.7px;height:23.3px;background:linear-gradient(#f2f6fb,#e3e9f0);border:1px solid #3a99e6;border-radius:3px"></div>
<div class="t" style="left:725.50px;top:559.43px;font-size:11.9px;color:#000;transform:scaleX(0.9597);">OK</div>
<div class="a" style="left:292.5px;top:615.3px;width:331px;height:114px;background:#fff;border:2px solid #000;border-radius:19px"></div>
<div class="t" style="left:313.90px;top:635.25px;font-size:28px;color:#000;font-family:'Liberation Serif',serif;transform:scaleX(1.0016);">Log’s details, no errors,</div>
<div class="t" style="left:313.90px;top:666.85px;font-size:28px;color:#000;font-family:'Liberation Serif',serif;">good :)</div>
<div class="a" style="left:1123px;top:471.3px;width:330.5px;height:159px;background:#fff;border:2px solid #000;border-radius:23px 26px 24px 23px"></div>
<div class="t" style="left:1146.9px;top:490.95px;font-size:28px;font-family:'Liberation Serif',serif">Open the <b style="text-decoration:underline;text-decoration-thickness:2px;text-underline-offset:3px">execution</b></div>
<div class="t" style="left:1146.90px;top:522.65px;font-size:28px;color:#000;font-family:'Liberation Serif',serif;">log/listing of the</div>
<div class="t" style="left:1146.90px;top:555.45px;font-size:28px;color:#000;font-family:'Liberation Serif',serif;transform:scaleX(0.9946);">particular module by</div>
<div class="t" style="left:1146.90px;top:587.55px;font-size:28px;color:#000;font-family:'Liberation Serif',serif;transform:scaleX(0.9940);">double click on it</div>
<svg style="left:0;top:0" width="1457" height="814" viewBox="0 0 1457 814"><line x1="462.8" y1="615.5" x2="431.5" y2="504" stroke="#000" stroke-width="1.8"/><path d="M429.6 497.5 L438.9 507.7 L433 506.5 L427.2 511.2 Z" fill="#000"/><line x1="1130.5" y1="625.2" x2="1034" y2="721.5" stroke="#000" stroke-width="1.8"/><path d="M1028.2 727.5 L1031.6 716 L1035 720.3 L1040.4 724.2 Z" fill="#000"/></svg>
</body></html>
